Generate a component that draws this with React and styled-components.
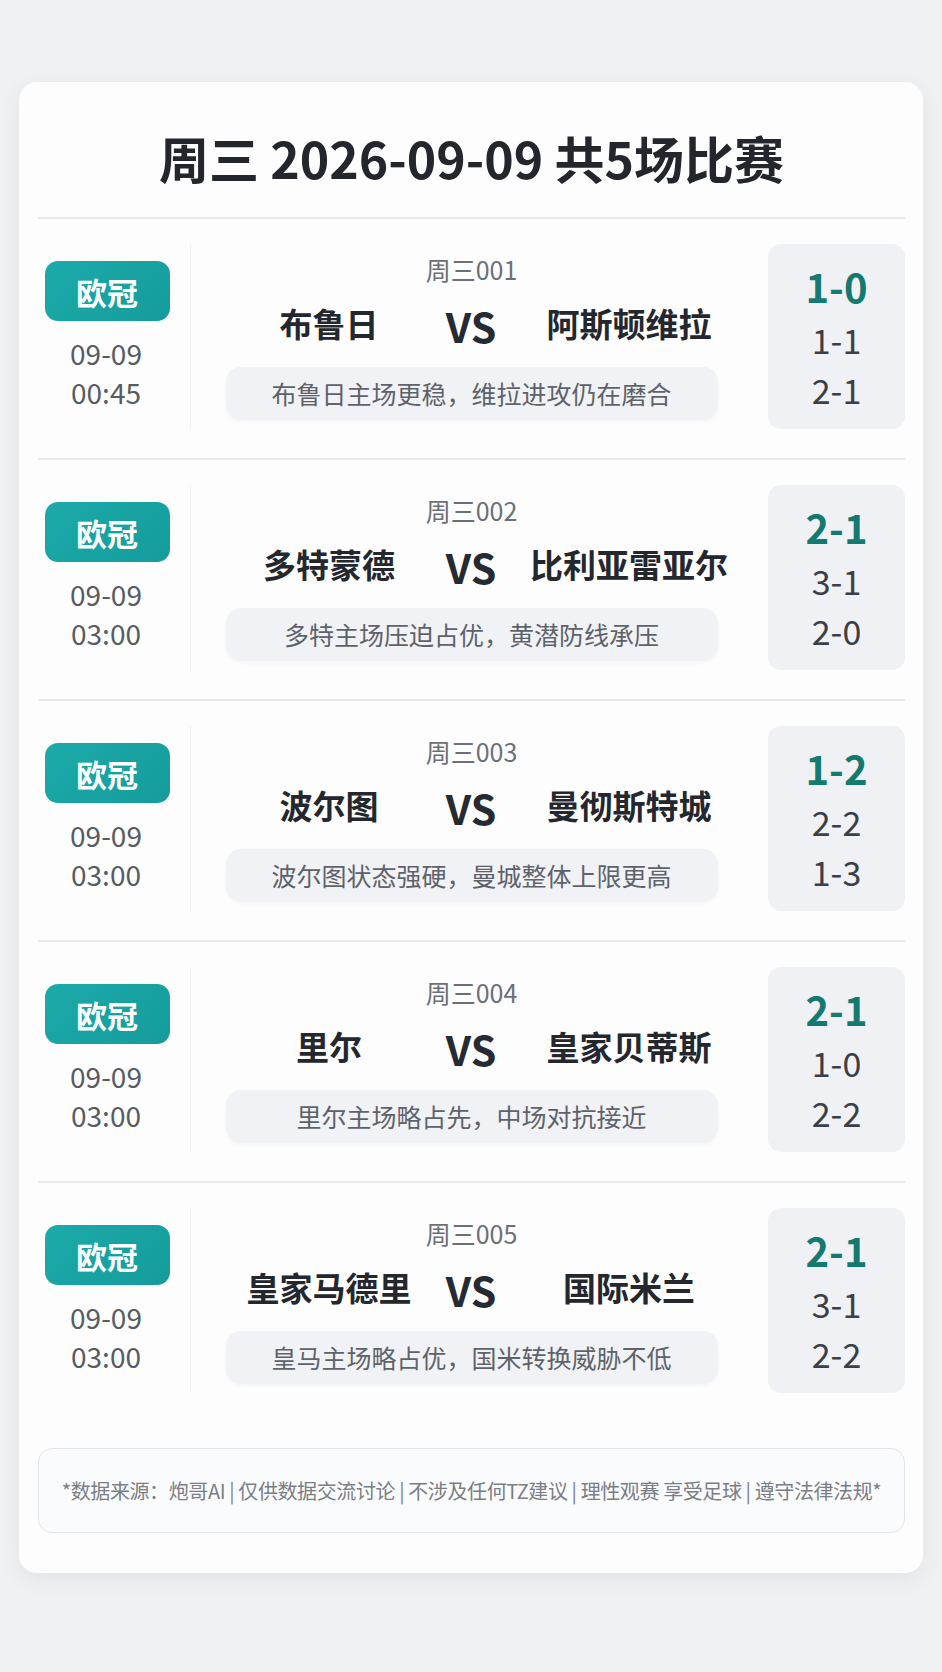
import styled, { createGlobalStyle } from 'styled-components'

const GlobalStyle = createGlobalStyle`
  html, body {
    margin: 0;
    padding: 0;
    background: #f0f1f3;
  }
  body {
    font-family: 'Noto Sans CJK SC', 'Noto Sans', sans-serif;
    color: #262930;
  }
`

const Page = styled.div`
  padding: 82px 19px 100px;
`

const Card = styled.div`
  background: #fdfdfd;
  border-radius: 18px;
  box-shadow: 0 6px 22px rgba(30, 40, 60, 0.07);
  padding: 0 18px 40px 19px;
`

const Title = styled.h1`
  margin: 0;
  padding: 45px 0 30px;
  text-align: center;
  font-size: 50px;
  line-height: 60px;
  font-weight: 700;
  color: #23262d;
  border-bottom: 2px solid #e8e9ec;
`

const MatchRow = styled.div`
  display: flex;
  align-items: stretch;
  padding: 25px 0 29px;
  border-bottom: ${({ last }) => (last ? 'none' : '2px solid #e9eaed')};
`

const LeftCol = styled.div`
  width: 136px;
  flex: none;
  display: flex;
  flex-direction: column;
  align-items: center;
  justify-content: center;
  padding-right: 16px;
  border-right: 1px solid #f0f1f3;
`

const Badge = styled.div`
  width: 125px;
  height: 60px;
  border-radius: 13px;
  background: linear-gradient(135deg, #1caaaa 0%, #149c9b 100%);
  color: #ffffff;
  font-size: 31px;
  font-weight: 700;
  display: flex;
  align-items: center;
  justify-content: center;
  margin-left: 2px;
  margin-bottom: 13px;
`

const DateLine = styled.div`
  font-size: 28px;
  line-height: 39px;
  color: #575b63;
`

const CenterCol = styled.div`
  flex: 1;
  display: flex;
  flex-direction: column;
  justify-content: center;
  margin-right: 16px;
`

const Code = styled.div`
  text-align: center;
  font-size: 25px;
  line-height: 30px;
  color: #6b6f77;
`

const Teams = styled.div`
  display: grid;
  grid-template-columns: 204px 80px 236px;
  padding-left: 36px;
  margin-top: 15px;
  font-size: 33px;
  line-height: 48px;
  font-weight: 700;
  color: #24272e;
`

const Team = styled.div`
  text-align: center;
  white-space: nowrap;
`

const Vs = styled.div`
  text-align: center;
  font-size: 41px;
  font-weight: 700;
  color: #262a33;
  transform: translateY(2px);
`

const Note = styled.div`
  margin: 20px auto 0;
  width: 492px;
  height: 53px;
  border-radius: 15px;
  background: #f1f2f5;
  box-shadow: 0 2px 4px rgba(0, 0, 0, 0.03);
  display: flex;
  align-items: center;
  justify-content: center;
  font-size: 25px;
  color: #5e626a;
`

const ScoreBox = styled.div`
  width: 137px;
  flex: none;
  border-radius: 13px;
  background: #eff1f4;
  padding: 13px 0 14px;
  display: flex;
  flex-direction: column;
  align-items: center;
`

const Score = styled.div`
  line-height: ${({ main }) => (main ? '58px' : '50px')};
  font-size: ${({ main }) => (main ? '40px' : '34px')};
  font-weight: ${({ main }) => (main ? 700 : 400)};
  color: ${({ main }) => (main ? '#147a6f' : '#3b3f47')};
`

const Footer = styled.div`
  margin-top: 26px;
  height: 83px;
  border: 1px solid #e2e4e8;
  border-radius: 14px;
  background: #fafbfc;
  display: flex;
  align-items: center;
  justify-content: center;
  font-size: 20px;
  color: #7a7e86;
  white-space: nowrap;
  letter-spacing: -0.4px;
`

const matches = [
  {
    code: '周三001', date: '09-09', time: '00:45', home: '布鲁日', away: '阿斯顿维拉',
    note: '布鲁日主场更稳，维拉进攻仍在磨合', scores: ['1-0', '1-1', '2-1']
  },
  {
    code: '周三002', date: '09-09', time: '03:00', home: '多特蒙德', away: '比利亚雷亚尔',
    note: '多特主场压迫占优，黄潜防线承压', scores: ['2-1', '3-1', '2-0']
  },
  {
    code: '周三003', date: '09-09', time: '03:00', home: '波尔图', away: '曼彻斯特城',
    note: '波尔图状态强硬，曼城整体上限更高', scores: ['1-2', '2-2', '1-3']
  },
  {
    code: '周三004', date: '09-09', time: '03:00', home: '里尔', away: '皇家贝蒂斯',
    note: '里尔主场略占先，中场对抗接近', scores: ['2-1', '1-0', '2-2']
  },
  {
    code: '周三005', date: '09-09', time: '03:00', home: '皇家马德里', away: '国际米兰',
    note: '皇马主场略占优，国米转换威胁不低', scores: ['2-1', '3-1', '2-2']
  }
]

const App = () => {
  return (
    <>
      <GlobalStyle />
      <Page>
        <Card>
          <Title>周三 2026-09-09 共5场比赛</Title>
          {matches.map((m, i) => (
            <MatchRow key={m.code} last={i === matches.length - 1}>
              <LeftCol>
                <Badge>欧冠</Badge>
                <DateLine>{m.date}</DateLine>
                <DateLine>{m.time}</DateLine>
              </LeftCol>
              <CenterCol>
                <Code>{m.code}</Code>
                <Teams>
                  <Team>{m.home}</Team>
                  <Vs>VS</Vs>
                  <Team>{m.away}</Team>
                </Teams>
                <Note>{m.note}</Note>
              </CenterCol>
              <ScoreBox>
                {m.scores.map((s, j) => (
                  <Score key={j} main={j === 0}>{s}</Score>
                ))}
              </ScoreBox>
            </MatchRow>
          ))}
          <Footer>*数据来源：炮哥AI | 仅供数据交流讨论 | 不涉及任何TZ建议 | 理性观赛 享受足球 | 遵守法律法规*</Footer>
        </Card>
      </Page>
    </>
  )
}

export default App
